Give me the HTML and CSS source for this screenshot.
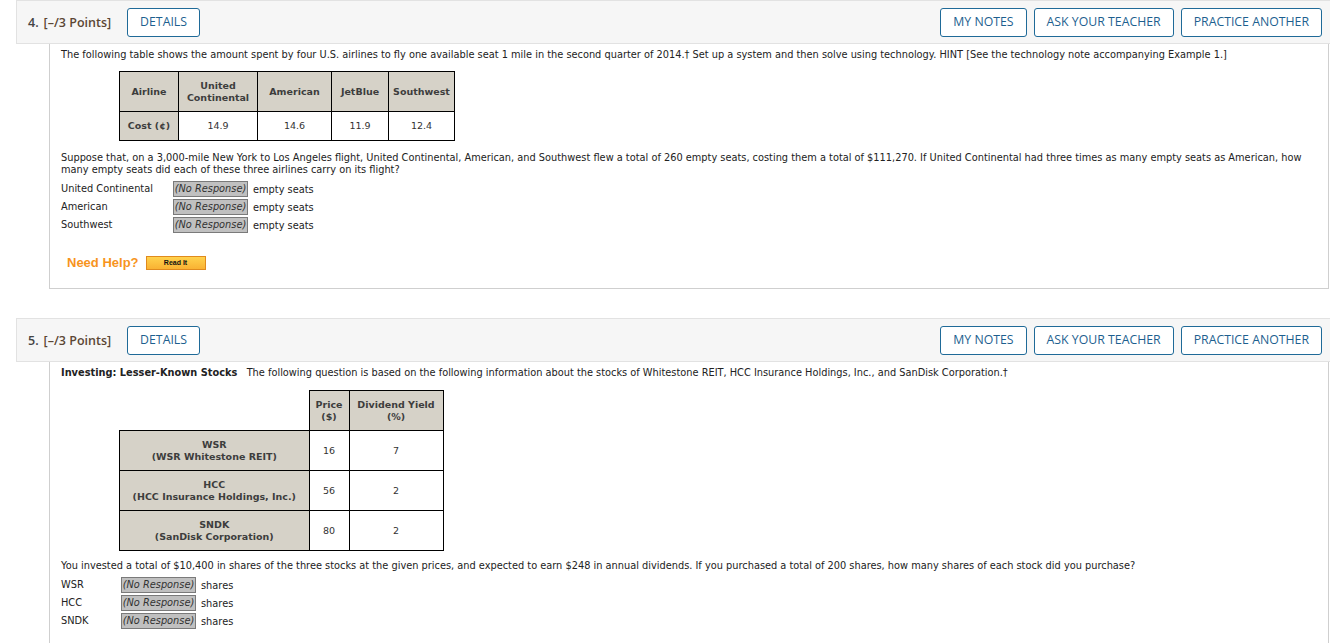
FILE: index.html
```html
<!DOCTYPE html>
<html>
<head>
<meta charset="utf-8">
<link rel="stylesheet" href="styles.css">
</head>
<body>
<div class="question">
  <div class="qhead">
    <span class="qnum">4.</span>
    <span class="qpts">[–/3 Points]</span>
    <button class="btn details">DETAILS</button>
    <span class="spacer"></span>
    <button class="btn">MY NOTES</button>
    <button class="btn">ASK YOUR TEACHER</button>
    <button class="btn">PRACTICE ANOTHER</button>
  </div>
  <div class="qbody q4">
    <p class="intro">The following table shows the amount spent by four U.S. airlines to fly one available seat 1 mile in the second quarter of 2014.† Set up a system and then solve using technology. HINT [See the technology note accompanying Example 1.]</p>
    <table class="data t1">
      <tr class="hrow">
        <th class="c1">Airline</th>
        <th class="c2">United<br>Continental</th>
        <th class="c3">American</th>
        <th class="c4">JetBlue</th>
        <th class="c5">Southwest</th>
      </tr>
      <tr class="brow">
        <th>Cost (¢)</th>
        <td>14.9</td>
        <td>14.6</td>
        <td>11.9</td>
        <td>12.4</td>
      </tr>
    </table>
    <p class="para">Suppose that, on a 3,000-mile New York to Los Angeles flight, United Continental, American, and Southwest flew a total of 260 empty seats, costing them a total of $111,270. If United Continental had three times as many empty seats as American, how many empty seats did each of these three airlines carry on its flight?</p>
    <div class="answers a4">
      <span class="lab">United Continental</span><span class="resp"><span class="box">(No Response)</span> empty seats</span>
      <span class="lab">American</span><span class="resp"><span class="box">(No Response)</span> empty seats</span>
      <span class="lab">Southwest</span><span class="resp"><span class="box">(No Response)</span> empty seats</span>
    </div>
    <div class="help">
      <span class="needhelp">Need Help?</span>
      <span class="readit">Read It</span>
    </div>
  </div>
</div>

<div class="question second">
  <div class="qhead">
    <span class="qnum">5.</span>
    <span class="qpts">[–/3 Points]</span>
    <button class="btn details">DETAILS</button>
    <span class="spacer"></span>
    <button class="btn">MY NOTES</button>
    <button class="btn">ASK YOUR TEACHER</button>
    <button class="btn">PRACTICE ANOTHER</button>
  </div>
  <div class="qbody q5">
    <p class="intro"><b>Investing: Lesser-Known Stocks</b>&nbsp;&nbsp; The following question is based on the following information about the stocks of Whitestone REIT, HCC Insurance Holdings, Inc., and SanDisk Corporation.†</p>
    <table class="data t2">
      <tr class="hrow">
        <td class="blank"></td>
        <th class="k2">Price<br>($)</th>
        <th class="k3">Dividend Yield<br>(%)</th>
      </tr>
      <tr class="srow">
        <th>WSR<br>(WSR Whitestone REIT)</th>
        <td>16</td>
        <td>7</td>
      </tr>
      <tr class="srow">
        <th>HCC<br>(HCC Insurance Holdings, Inc.)</th>
        <td>56</td>
        <td>2</td>
      </tr>
      <tr class="srow">
        <th>SNDK<br>(SanDisk Corporation)</th>
        <td>80</td>
        <td>2</td>
      </tr>
    </table>
    <p class="para">You invested a total of $10,400 in shares of the three stocks at the given prices, and expected to earn $248 in annual dividends. If you purchased a total of 200 shares, how many shares of each stock did you purchase?</p>
    <div class="answers a5">
      <span class="lab">WSR</span><span class="resp"><span class="box">(No Response)</span> shares</span>
      <span class="lab">HCC</span><span class="resp"><span class="box">(No Response)</span> shares</span>
      <span class="lab">SNDK</span><span class="resp"><span class="box">(No Response)</span> shares</span>
    </div>
  </div>
</div>
</body>
</html>
```

FILE: styles.css
```css
html, body {
  margin: 0;
  padding: 0;
  background: #ffffff;
  overflow: hidden;
}
body {
  font-family: "DejaVu Sans", Verdana, sans-serif;
  font-size: 9.8px;
  color: #222;
}
.question {
  margin-left: 16px;
}
.question.second {
  margin-top: 29px;
}
.qhead {
  height: 42px;
  background: #f6f6f6;
  border: 1px solid #e2e2e2;
  border-right: none;
  display: flex;
  align-items: center;
  padding: 0 8px 0 11px;
  font-family: "Open Sans", sans-serif;
}
.qnum {
  font-size: 12.5px;
  font-weight: 600;
  color: #444;
  margin-right: 5px;
}
.qpts {
  font-size: 12.5px;
  font-weight: 600;
  color: #5b4634;
  margin-right: 16px;
}
.spacer {
  flex: 1;
}
.btn {
  font-family: "Open Sans", sans-serif;
  font-size: 12.3px;
  color: #1d5f8f;
  background: #fff;
  border: 1px solid #1f6a98;
  border-radius: 3px;
  height: 29px;
  padding: 0 12px 1px 12px;
  margin-left: 7px;
  cursor: pointer;
}
.btn.details {
  margin-left: 0;
}
.qbody {
  margin-left: 33px;
  border-left: 1px solid #cfcfcf;
  border-right: 1px solid #cfcfcf;
  border-bottom: 1px solid #cfcfcf;
  margin-right: 1px;
  padding: 5px 11px 0 11px;
}
.q4 {
  height: 239px;
}
.q5 {
  height: 400px;
  border-bottom: none;
}
p {
  margin: 0;
  line-height: 12px;
}
.intro {
  margin-bottom: 10px;
}
table.data {
  border-collapse: collapse;
  margin-left: 58px;
  font-weight: bold;
  color: #333;
  font-size: 9.5px;
}
table.data th,
table.data td {
  border: 1px solid #000;
  text-align: center;
  padding: 0;
  line-height: 12px;
}
table.data th {
  background: #d6d2c8;
  color: #3d3d3d;
}
table.data td {
  background: #fff;
  font-weight: normal;
  color: #333;
}
.t1 .hrow th { height: 39px; }
.t1 .brow th, .t1 .brow td { height: 28px; }
.t1 .c1 { width: 58px; }
.t1 .c2 { width: 78px; }
.t1 .c3 { width: 73px; }
.t1 .c4 { width: 56px; }
.t1 .c5 { width: 65px; }
.para {
  margin-top: 11px;
  margin-bottom: 5px;
}
.answers {
  display: grid;
  grid-auto-rows: 16px;
  row-gap: 2px;
  align-items: center;
}
.a4 { grid-template-columns: 112px auto; }
.a5 { grid-template-columns: 60px auto; }
.lab {
  line-height: 16px;
}
.resp {
  display: flex;
  align-items: center;
  height: 16px;
}
.box {
  display: inline-block;
  width: 73px;
  height: 14px;
  line-height: 14px;
  background: #c0c0c0;
  border: 1px solid #7a7a7a;
  font-style: italic;
  color: #333;
  text-align: center;
  margin-right: 5px;
}
.help {
  margin-top: 22px;
  margin-left: 6px;
  display: flex;
  align-items: center;
}
.needhelp {
  font-family: "Liberation Sans", Arial, sans-serif;
  font-weight: bold;
  font-size: 13px;
  color: #f7941d;
  margin-right: 7px;
}
.readit {
  display: inline-block;
  width: 58px;
  height: 12px;
  line-height: 12px;
  border: 1px solid #e08a1e;
  background: linear-gradient(#ffd24d, #f9b233);
  font-family: "Liberation Sans", Arial, sans-serif;
  font-weight: bold;
  font-size: 7px;
  color: #111;
  text-align: center;
}
.q5 .intro {
  margin-bottom: 11px;
}
.t2 .blank {
  border: none;
  border-bottom: 1px solid #000;
  background: transparent;
  width: 189px;
}
.t2 .hrow th { height: 39px; }
.t2 .k2 { width: 39px; }
.t2 .k3 { width: 93px; }
.t2 .srow th, .t2 .srow td { height: 39px; }
.q5 .para {
  margin-top: 9px;
  margin-bottom: 5px;
}
```
